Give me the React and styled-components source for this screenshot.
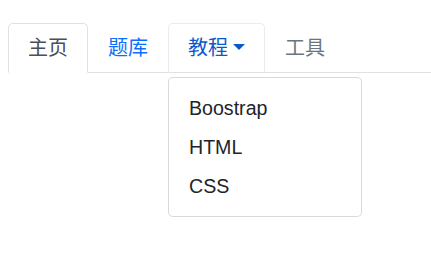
import React from 'react'
import styled, { createGlobalStyle } from 'styled-components'

const GlobalStyle = createGlobalStyle`
  html, body {
    margin: 0;
    padding: 0;
    background: #fff;
  }
  body {
    font-family: "Liberation Sans", "Noto Sans CJK SC", sans-serif;
    font-size: 20px;
    line-height: 1.5;
    color: #212529;
  }
`

const Page = styled.div`
  min-height: 255px;
  padding: 23px 0 0 8px;
  box-sizing: border-box;
`

const Tabs = styled.ul`
  display: flex;
  list-style: none;
  margin: 0;
  padding: 0;
  border-bottom: 1px solid #dee2e6;
`

const TabItem = styled.li`
  position: relative;
  margin-bottom: -1px;
`

const TabLink = styled.a`
  display: flex;
  align-items: center;
  padding: 9px 19px;
  line-height: 30px;
  border: 1px solid transparent;
  border-top-left-radius: 5px;
  border-top-right-radius: 5px;
  text-decoration: none;
  cursor: pointer;
  color: ${p => p.$color};
  background: ${p => (p.$active ? '#fff' : 'transparent')};
  border-color: ${p =>
    p.$active ? '#dee2e6 #dee2e6 #fff' : p.$open ? '#e9ecef #e9ecef #dee2e6' : 'transparent'};
`

const Caret = styled.span`
  display: inline-block;
  margin-left: 5px;
  border-top: 6px solid currentColor;
  border-left: 6px solid transparent;
  border-right: 6px solid transparent;
  margin-top: -2px;
`

const Menu = styled.ul`
  position: absolute;
  top: 100%;
  left: 0;
  margin: 4px 0 0;
  padding: 11px 0 10px;
  list-style: none;
  min-width: 192px;
  background: #fff;
  border: 1px solid rgba(0, 0, 0, 0.15);
  border-radius: 5px;
  z-index: 10;
`

const MenuItem = styled.li`
  padding: 5px 20px;
  font-size: 19.6px;
  line-height: 29px;
  color: #212529;
  white-space: nowrap;
`

export default function App() {
  return (
    <Page>
      <GlobalStyle />
      <Tabs>
        <TabItem>
          <TabLink $active $color="#495057">主页</TabLink>
        </TabItem>
        <TabItem>
          <TabLink $color="#0d6efd">题库</TabLink>
        </TabItem>
        <TabItem>
          <TabLink $open $color="#0a58ca">
            教程<Caret />
          </TabLink>
          <Menu>
            <MenuItem>Boostrap</MenuItem>
            <MenuItem>HTML</MenuItem>
            <MenuItem>CSS</MenuItem>
          </Menu>
        </TabItem>
        <TabItem>
          <TabLink $color="#6c757d">工具</TabLink>
        </TabItem>
      </Tabs>
    </Page>
  )
}
